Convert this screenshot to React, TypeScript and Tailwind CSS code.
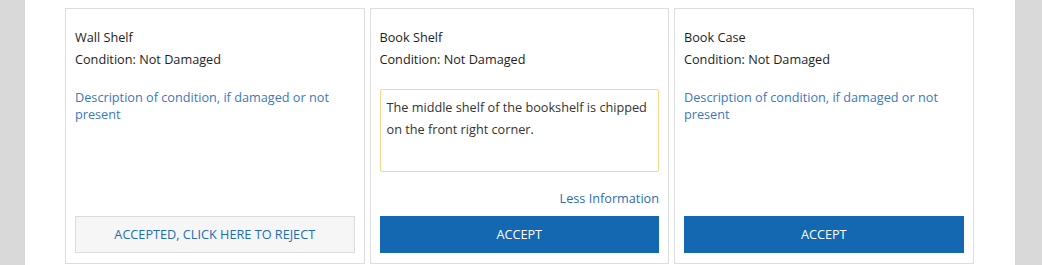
import React from "react";

const font = { fontFamily: '"Open Sans", "Liberation Sans", sans-serif' };

function Card({
  title,
  children,
  button,
}: {
  title: string;
  children: React.ReactNode;
  button: React.ReactNode;
}) {
  return (
    <div className="flex w-[299.5px] shrink-0 flex-col border border-[#dedede] bg-white px-[9px] pb-[10px] pt-[17px]">
      <div className="text-[12.7px] leading-[22px] text-[#1e1e1e]">{title}</div>
      <div className="text-[12.7px] leading-[22px] text-[#1e1e1e]">Condition: Not Damaged</div>
      {children}
      <div className="mt-auto">{button}</div>
    </div>
  );
}

export default function App() {
  return (
    <div className="flex h-[265px] w-[1042px] bg-[#d9d9d9]" style={font}>
      <div className="ml-[25px] flex h-full w-[990px] gap-[5px] bg-white pl-[40px] pt-[8px] pb-[1px]">
        <Card
          title="Wall Shelf"
          button={
            <button className="flex h-[37px] w-full items-center justify-center border border-[#dcdcdc] bg-[#f6f6f6] text-[12.7px] uppercase text-[#1f6cb5]">
              Accepted, click here to reject
            </button>
          }
        >
          <div className="mt-[19px] text-[12.7px] leading-[17px] text-[#3b78c0]">
            Description of condition, if damaged or not present
          </div>
        </Card>
        <Card
          title="Book Shelf"
          button={
            <button className="flex h-[37px] w-full items-center justify-center bg-[#1368b1] text-[12.7px] uppercase text-white">
              Accept
            </button>
          }
        >
          <div className="mt-[19px] h-[83px] rounded-[2px] border border-[#fbd58c] px-[6px] pt-[6px] text-[12.7px] leading-[22px] text-[#333333]">
            The middle shelf of the bookshelf is chipped on the front right corner.
          </div>
          <div className="mt-[18px] text-right text-[12.7px] leading-[17px] text-[#2b6db5]">
            Less Information
          </div>
        </Card>
        <Card
          title="Book Case"
          button={
            <button className="flex h-[37px] w-full items-center justify-center bg-[#1368b1] text-[12.7px] uppercase text-white">
              Accept
            </button>
          }
        >
          <div className="mt-[19px] text-[12.7px] leading-[17px] text-[#3b78c0]">
            Description of condition, if damaged or not present
          </div>
        </Card>
      </div>
    </div>
  );
}
